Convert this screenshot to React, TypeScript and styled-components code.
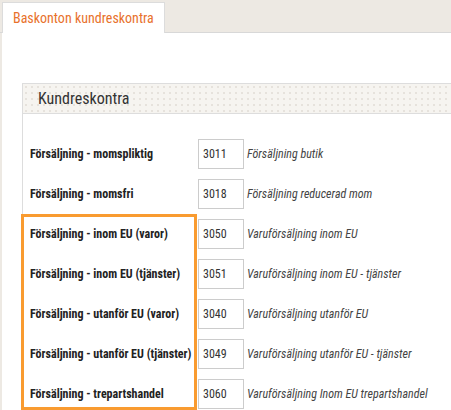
import React from "react";
import styled, { createGlobalStyle } from "styled-components";

const GlobalStyle = createGlobalStyle`
  html, body {
    margin: 0;
    padding: 0;
    background: #ede9e3;
    font-family: "Roboto Condensed", "Liberation Sans Narrow", Roboto, "Liberation Sans", sans-serif;
  }
`;

const TabBar = styled.div`
  height: 33px;
  box-sizing: border-box;
  padding: 2px 0 0 2px;
  display: flex;
  align-items: flex-end;
  border-bottom: 1px solid #d8d8d8;
`;

const Tab = styled.div`
  height: 31px;
  box-sizing: border-box;
  margin-bottom: -1px;
  padding: 0 10px;
  display: flex;
  align-items: center;
  background: #fff;
  border: 1px solid #dcdcdc;
  border-bottom: none;
  color: #e8712b;
  font-family: Roboto, "Liberation Sans", sans-serif;
  font-stretch: condensed;
  font-size: 14px;
`;

const Content = styled.div`
  margin-left: 2px;
  background: #fff;
  padding: 50px 0 0 20px;
  height: 377px;
  box-sizing: border-box;
  overflow: hidden;
`;

const Panel = styled.div`
  position: relative;
  border: 1px solid #dddddd;
  border-right: none;
  border-bottom: none;
`;

const PanelHeader = styled.div`
  height: 29px;
  display: flex;
  align-items: center;
  padding-left: 15px;
  background-color: #f6f4f0;
  background-image: radial-gradient(#e6e2dc 0.8px, transparent 1px);
  background-size: 6px 6px;
  border-bottom: 1px solid #dddddd;
  color: #333;
  font-family: Roboto, "Liberation Sans", sans-serif;
  font-stretch: condensed;
  font-size: 16px;
`;

const PanelBody = styled.div`
  padding: 25px 0 0 0;
`;

const Row = styled.div`
  display: flex;
  align-items: center;
  height: 30px;
  margin-bottom: 10px;
`;

const Label = styled.div`
  width: 175px;
  box-sizing: border-box;
  padding-left: 7px;
  font-weight: 700;
  font-size: 12px;
  color: #222;
  white-space: nowrap;
`;

const AccountInput = styled.div`
  width: 46px;
  height: 30px;
  box-sizing: border-box;
  border: 1px solid #cccccc;
  padding: 0 4px;
  display: flex;
  align-items: center;
  font-size: 12px;
  color: #333;
`;

const Description = styled.div`
  padding-left: 3px;
  font-style: italic;
  font-size: 12px;
  color: #444;
  white-space: nowrap;
`;

const Highlight = styled.div`
  position: absolute;
  left: -2px;
  top: 130px;
  width: 176px;
  height: 196px;
  box-sizing: border-box;
  border: 3px solid #f99b30;
  pointer-events: none;
`;

const rows = [
  { label: "Försäljning - momspliktig", account: "3011", desc: "Försäljning butik" },
  { label: "Försäljning - momsfri", account: "3018", desc: "Försäljning reducerad mom" },
  { label: "Försäljning - inom EU (varor)", account: "3050", desc: "Varuförsäljning inom EU" },
  { label: "Försäljning - inom EU (tjänster)", account: "3051", desc: "Varuförsäljning inom EU - tjänster" },
  { label: "Försäljning - utanför EU (varor)", account: "3040", desc: "Varuförsäljning utanför EU" },
  { label: "Försäljning - utanför EU (tjänster)", account: "3049", desc: "Varuförsäljning utanför EU - tjänster" },
  { label: "Försäljning - trepartshandel", account: "3060", desc: "Varuförsäljning Inom EU trepartshandel" },
];

export default function App() {
  return (
    <>
      <GlobalStyle />
      <TabBar>
        <Tab>Baskonton kundreskontra</Tab>
      </TabBar>
      <Content>
        <Panel>
          <PanelHeader>Kundreskontra</PanelHeader>
          <PanelBody>
            {rows.map((r) => (
              <Row key={r.account}>
                <Label>{r.label}</Label>
                <AccountInput>{r.account}</AccountInput>
                <Description>{r.desc}</Description>
              </Row>
            ))}
          </PanelBody>
          <Highlight />
        </Panel>
      </Content>
    </>
  );
}
